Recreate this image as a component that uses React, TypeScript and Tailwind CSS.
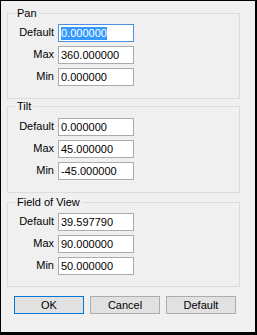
import { useState } from 'react'

const font = { fontFamily: '"Liberation Sans", Arial, sans-serif' }

type Row = { label: string; value: string; focus?: boolean }

const groups: { title: string; rows: Row[]; cls: string }[] = [
  {
    title: 'Pan',
    cls: 'mt-[6px] pt-[4px] pb-[12px]',
    rows: [
      { label: 'Default', value: '0.000000', focus: true },
      { label: 'Max', value: '360.000000' },
      { label: 'Min', value: '0.000000' },
    ],
  },
  {
    title: 'Tilt',
    cls: 'mt-px pt-[5px] pb-[12px]',
    rows: [
      { label: 'Default', value: '0.000000' },
      { label: 'Max', value: '45.000000' },
      { label: 'Min', value: '-45.000000' },
    ],
  },
  {
    title: 'Field of View',
    cls: 'mt-[3px] pt-[4px] pb-[11px]',
    rows: [
      { label: 'Default', value: '39.597790' },
      { label: 'Max', value: '90.000000' },
      { label: 'Min', value: '50.000000' },
    ],
  },
]

function Field({ row }: { row: Row }) {
  return (
    <div className="flex items-center gap-1 h-[18px]">
      <div className="w-[46px] text-right leading-[13px] -mt-[2px]">{row.label}</div>
      <div
        className={`w-[76px] h-[18px] bg-white border pl-[2px] flex items-center leading-[13px] ${
          row.focus ? 'border-[#4a90e2]' : 'border-[#ababab]'
        }`}
      >
        {row.focus ? <span className="bg-[#3399ff] text-white">{row.value}</span> : row.value}
      </div>
    </div>
  )
}

export default function App() {
  const [groupsState] = useState(groups)
  return (
    <div
      style={font}
      className="w-[257px] h-[335px] bg-[#f0f0f0] text-black text-[11px] border-l border-t border-r-2 border-b-[3px] border-black flex flex-col pl-[6px]"
    >
      {groupsState.map(g => (
        <fieldset
          key={g.title}
          className={`w-[233px] border border-[#dcdcdc] pl-0 flex flex-col gap-1 ${g.cls}`}
        >
          <legend className="ml-[7px] px-[2px] leading-[13px]">{g.title}</legend>
          {g.rows.map(r => (
            <Field key={r.label} row={r} />
          ))}
        </fieldset>
      ))}

      <div className="flex gap-[6px] mt-[9px] ml-[7px]">
        {['OK', 'Cancel', 'Default'].map(b => (
          <button
            key={b}
            className={`w-[70px] h-[18px] bg-[#e1e1e1] border leading-[13px] text-[11px] text-black ${
              b === 'OK' ? 'border-[#0078d7]' : 'border-[#adadad]'
            }`}
          >
            {b}
          </button>
        ))}
      </div>
    </div>
  )
}
